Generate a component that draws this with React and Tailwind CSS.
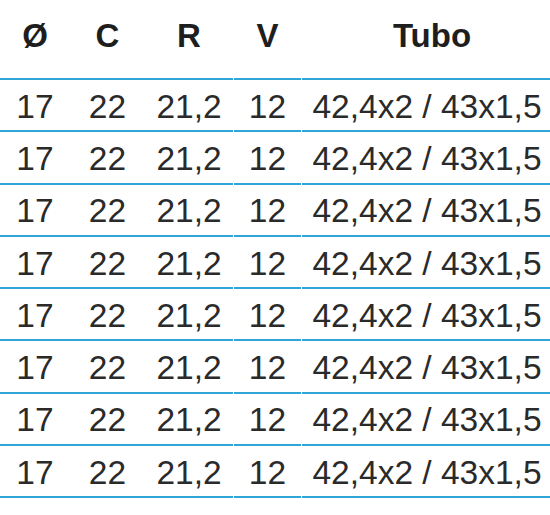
import React from "react";

const cols = [
  { w: "w-[70px]", gap: "" },
  { w: "w-[75px]", gap: "" },
  { w: "w-[88px]", gap: "" },
  { w: "w-[67px]", gap: "ml-px" },
  { w: "flex-1", gap: "ml-px" },
];

const header = ["Ø", "C", "R", "V", "Tubo"];
const row = ["17", "22", "21,2", "12", "42,4x2 / 43x1,5"];

const App = () => {
  const rows = Array.from({ length: 8 }, (_, i) => i);

  return (
    <div className="w-[550px] h-[515px] bg-white text-[#2a2a2a] font-['Liberation_Sans',Arial,sans-serif] overflow-hidden">
      <div className="flex">
        {header.map((h, i) => (
          <div
            key={h}
            className={`${cols[i].w} ${cols[i].gap} h-[80px] border-b-[2.5px] border-[#2fa6d6] flex items-center justify-center pb-[8px] text-[33px] font-bold leading-none text-[#1e1e1e] ${i === 4 ? "pl-[12px]" : ""}`}
          >
            {h}
          </div>
        ))}
      </div>
      {rows.map((r) => (
        <div key={r} className="flex">
          {row.map((c, i) => (
            <div
              key={i}
              className={`${cols[i].w} ${cols[i].gap} h-[52.25px] border-b-[2.5px] border-[#2fa6d6] flex items-center justify-center pt-[3px] text-[33.5px] leading-none ${i === 4 ? "pl-[2px]" : ""}`}
            >
              {c}
            </div>
          ))}
        </div>
      ))}
    </div>
  );
};

export default App;
